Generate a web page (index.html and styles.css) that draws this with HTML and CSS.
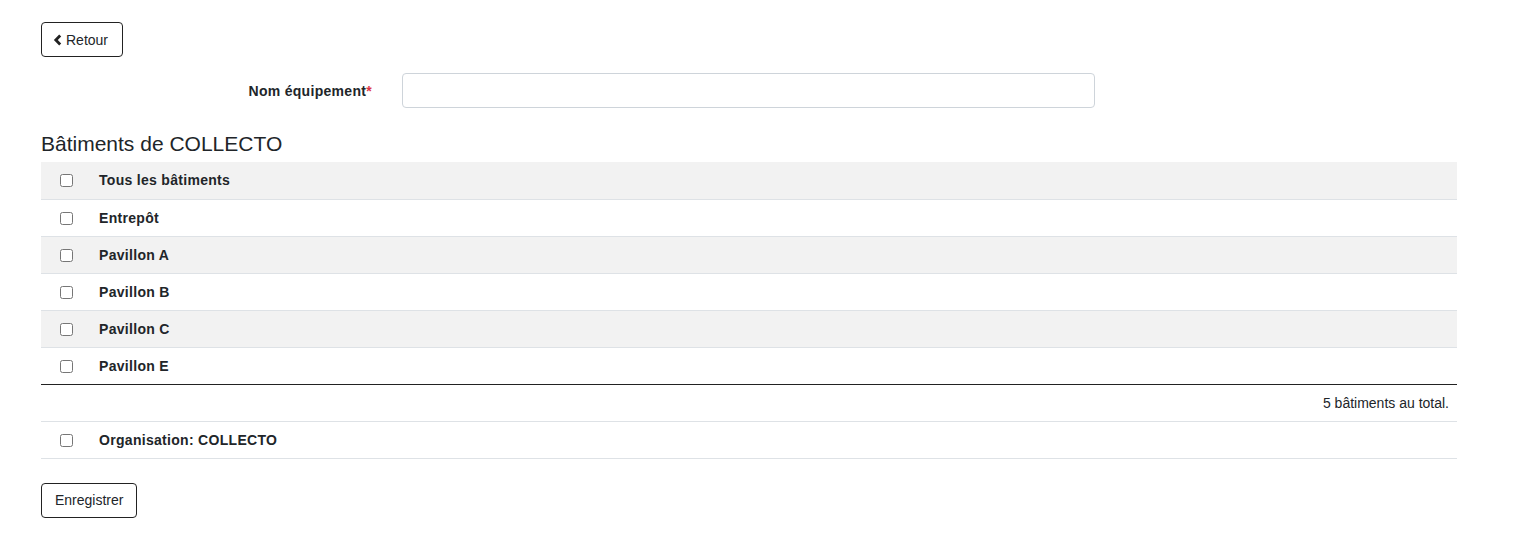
FILE: index.html
```html
<!DOCTYPE html>
<html lang="fr">
<head>
    <meta charset="UTF-8">
    <title>Équipement</title>
    <link rel="stylesheet" href="styles.css">
</head>
<body>
    <div class="page">
        <button class="btn btn-back">
            <svg class="chevron" width="9" height="12" viewBox="0 0 9 12"><path d="M7.2 1.5 L2.8 6 L7.2 10.5" fill="none" stroke="#222" stroke-width="2.8"/></svg>
            Retour
        </button>

        <div class="form-row">
            <label class="form-label" for="nom">Nom équipement<span class="req">*</span></label>
            <input type="text" id="nom" class="text-input">
        </div>

        <h2 class="section-title">Bâtiments de COLLECTO</h2>

        <table class="buildings">
            <thead>
                <tr>
                    <td class="cell-check"><input type="checkbox"></td>
                    <td class="cell-name">Tous les bâtiments</td>
                </tr>
            </thead>
            <tbody>
                <tr>
                    <td class="cell-check"><input type="checkbox"></td>
                    <td class="cell-name">Entrepôt</td>
                </tr>
                <tr class="striped">
                    <td class="cell-check"><input type="checkbox"></td>
                    <td class="cell-name">Pavillon A</td>
                </tr>
                <tr>
                    <td class="cell-check"><input type="checkbox"></td>
                    <td class="cell-name">Pavillon B</td>
                </tr>
                <tr class="striped">
                    <td class="cell-check"><input type="checkbox"></td>
                    <td class="cell-name">Pavillon C</td>
                </tr>
                <tr class="last">
                    <td class="cell-check"><input type="checkbox"></td>
                    <td class="cell-name">Pavillon E</td>
                </tr>
            </tbody>
            <tfoot>
                <tr>
                    <td colspan="2" class="total">5 bâtiments au total.</td>
                </tr>
                <tr class="org">
                    <td class="cell-check"><input type="checkbox"></td>
                    <td class="cell-name">Organisation: COLLECTO</td>
                </tr>
            </tfoot>
        </table>

        <button class="btn btn-save">Enregistrer</button>
    </div>
</body>
</html>
```

FILE: styles.css
```css
body {
    margin: 0;
    font-family: 'Liberation Sans', Arial, sans-serif;
    font-size: 14px;
    color: #212529;
    background: #ffffff;
}

.page {
    padding: 22px 72px 0 41px;
}

.btn {
    display: flex;
    align-items: center;
    gap: 4px;
    height: 35px;
    padding: 0 13px;
    background: #ffffff;
    border: 1px solid #222;
    border-radius: 4px;
    font-family: inherit;
    font-size: 14px;
    color: #212529;
    cursor: pointer;
}

.btn-back {
    width: 82px;
    padding-left: 11px;
}

.form-row {
    display: flex;
    align-items: center;
    margin-top: 16px;
}

.form-label {
    width: 331px;
    text-align: right;
    font-weight: bold;
    font-size: 14px;
    letter-spacing: 0.3px;
}

.req {
    color: #dc3545;
}

.text-input {
    margin-left: 30px;
    width: 693px;
    height: 35px;
    box-sizing: border-box;
    border: 1px solid #ced4da;
    border-radius: 4px;
}

.section-title {
    margin: 24px 0 6px;
    font-size: 21px;
    font-weight: normal;
    line-height: 24px;
}

.buildings {
    width: 100%;
    border-collapse: collapse;
}

.buildings td {
    height: 37px;
    padding: 0;
    border-bottom: 1px solid #dee2e6;
    box-sizing: border-box;
}

.buildings thead tr,
.buildings tr.striped {
    background: #f2f2f2;
}

.buildings tr.last td {
    border-bottom: 1px solid #222;
}

.cell-check {
    width: 50px;
    text-align: center;
}

.cell-check input {
    width: 13px;
    height: 13px;
    margin: 4px 0 0 0;
}

.cell-name {
    padding-left: 8px !important;
    font-weight: bold;
    letter-spacing: 0.3px;
}

.total {
    text-align: right;
    padding-right: 8px !important;
}

.btn-save {
    margin-top: 24px;
}
```
